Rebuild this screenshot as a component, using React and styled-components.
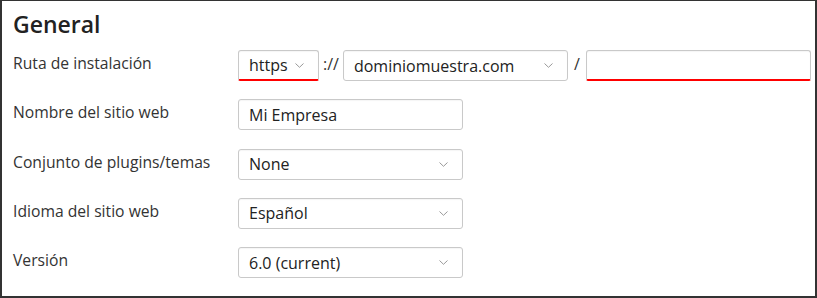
import React from 'react';
import styled, { createGlobalStyle } from 'styled-components';

const GlobalStyle = createGlobalStyle`
  html, body {
    margin: 0;
    padding: 0;
    background: #fff;
  }
  body {
    font-family: "Open Sans", "Noto Sans", sans-serif;
    color: #333;
  }
`;

function Chevron() {
  return (
    <svg width="9" height="5" viewBox="0 0 9 5">
      <path d="M0.5 0.5 L4.5 4.3 L8.5 0.5" fill="none" stroke="#999" strokeWidth="1" />
    </svg>
  );
}

function Select({ value, width, error }) {
  return (
    <Box width={width} $error={error}>
      <Value>{value}</Value>
      <Chevron />
    </Box>
  );
}

function App() {
  return (
    <>
      <GlobalStyle />
      <Frame>
        <Heading>General</Heading>
        <Form>
          <Row>
            <Label>Ruta de instalación</Label>
            <Controls>
              <Select value="https" width={81} error />
              <Sep>://</Sep>
              <Select value="dominiomuestra.com" width={225} />
              <Sep $slash>/</Sep>
              <Box width={225} $error />
            </Controls>
          </Row>
          <Row>
            <Label>Nombre del sitio web</Label>
            <Box width={225}>
              <Value>Mi Empresa</Value>
            </Box>
          </Row>
          <Row>
            <Label>Conjunto de plugins/temas</Label>
            <Select value="None" width={225} />
          </Row>
          <Row>
            <Label>Idioma del sitio web</Label>
            <Select value="Español" width={225} />
          </Row>
          <Row>
            <Label>Versión</Label>
            <Select value="6.0 (current)" width={225} />
          </Row>
        </Form>
      </Frame>
    </>
  );
}

export default App;

const Frame = styled.div`
  box-sizing: border-box;
  width: 817px;
  height: 298px;
  border: 2px solid #333;
  border-top-width: 1px;
  padding: 9px 0 0 11px;
`;

const Heading = styled.h2`
  margin: 0 0 12px;
  font-size: 23px;
  line-height: 28px;
  font-weight: 600;
  color: #222;
`;

const Form = styled.div`
  display: flex;
  flex-direction: column;
  gap: 18.3px;
`;

const Row = styled.div`
  display: grid;
  grid-template-columns: 225px auto;
  align-items: start;
`;

const Label = styled.div`
  font-size: 15.7px;
  line-height: 22px;
  padding-top: 2px;
  color: #333;
`;

const Controls = styled.div`
  display: flex;
  align-items: center;
`;

const Sep = styled.span`
  font-size: 16px;
  color: #333;
  padding: ${(p) => (p.$slash ? '0 6px 0 6px' : '0 4px 0 4px')};
  margin-top: -3px;
`;

const Box = styled.div`
  box-sizing: border-box;
  width: ${(p) => p.width}px;
  height: 31px;
  display: flex;
  align-items: center;
  justify-content: space-between;
  padding: 0 14px 0 10px;
  border: 1px solid #c9c9c9;
  border-radius: 3px;
  background: #fff;
  box-shadow: inset 0 1px 1px rgba(0, 0, 0, 0.04);
  ${(p) => p.$error && `border-bottom: 2px solid #f00; border-bottom-left-radius: 2px; border-bottom-right-radius: 2px;`}
`;

const Value = styled.span`
  font-size: 16px;
  color: #222;
  white-space: nowrap;
`;
